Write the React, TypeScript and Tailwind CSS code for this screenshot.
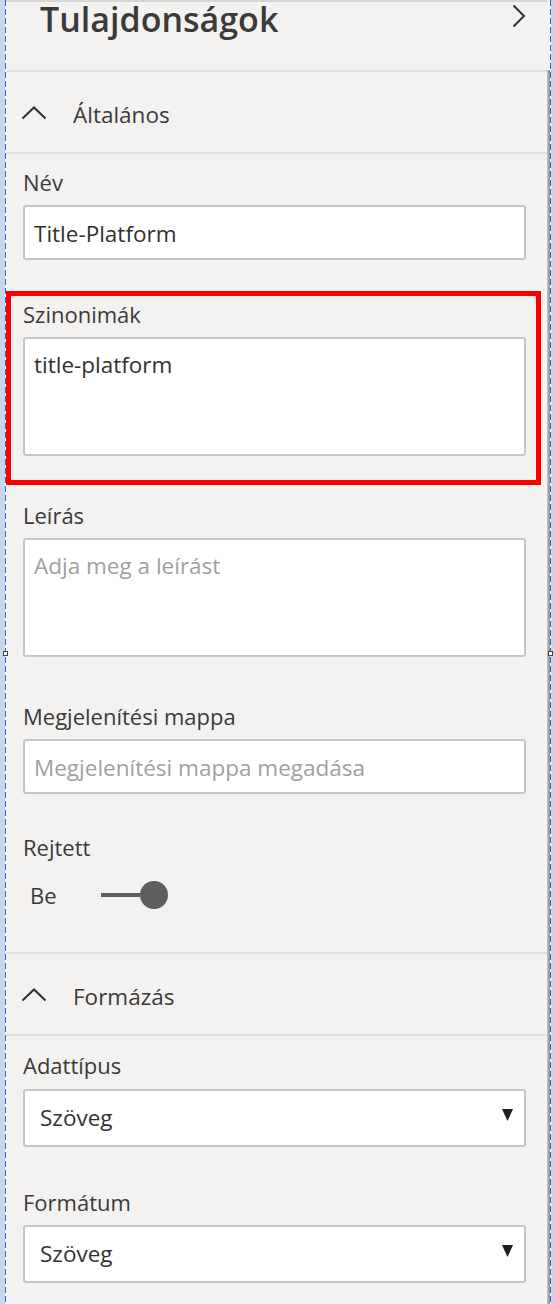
import { ReactNode } from 'react'

const textColor = 'text-[#3b3a39]'

function Label({ children, className = '' }: { children: ReactNode; className?: string }) {
  return <div className={`text-[22px] leading-[28px] ${textColor} ${className}`}>{children}</div>
}

function SectionHeader({ title }: { title: string }) {
  return (
    <>
      <div className="h-[80px] flex items-center pt-[6px]">
        <svg width="26" height="14" viewBox="0 0 26 14" className="ml-[15px] mt-[-4px]" fill="none">
          <path d="M1.5 12.5 L13 1.5 L24.5 12.5" stroke="#323130" strokeWidth="2" />
        </svg>
        <span className={`ml-[26px] text-[22.5px] ${textColor}`}>{title}</span>
      </div>
      <div className="h-[2px] bg-[#e1dfdd]" />
    </>
  )
}

function TextBox({ value, placeholder, className = '' }: { value?: string; placeholder?: string; className?: string }) {
  return (
    <div
      className={`h-[55px] bg-white border-2 border-[#c8c6c4] rounded-[3px] flex items-center pl-[9px] pt-[2px] text-[22.5px] ${className}`}
    >
      {value ? <span className="text-[#323130]">{value}</span> : <span className="text-[#a19f9d]">{placeholder}</span>}
    </div>
  )
}

function TextArea({ value, placeholder, className = '' }: { value?: string; placeholder?: string; className?: string }) {
  return (
    <div className={`h-[119px] bg-white border-2 border-[#c8c6c4] rounded-[3px] pl-[9px] pt-[12px] text-[22.5px] leading-[28px] ${className}`}>
      {value ? <span className="text-[#323130]">{value}</span> : <span className="text-[#a19f9d]">{placeholder}</span>}
    </div>
  )
}

function Select({ value, className = '' }: { value: string; className?: string }) {
  return (
    <div
      className={`h-[58px] bg-white border-2 border-[#c8c6c4] rounded-[3px] flex items-center justify-between pl-[15px] pr-[11px] text-[22.5px] text-[#323130] ${className}`}
    >
      <span>{value}</span>
      <svg width="11" height="12" viewBox="0 0 11 12" className="mt-[-6px]">
        <path d="M0 0 H11 L5.5 12 Z" fill="#201f1e" />
      </svg>
    </div>
  )
}

export default function App() {
  return (
    <div className="relative w-[554px] h-[1304px] overflow-hidden flex bg-[#c8d5ea] font-['Open_Sans','Noto_Sans',sans-serif]">
      <div className="w-[5px] shrink-0" />
      <div className="w-px shrink-0 bg-[repeating-linear-gradient(to_bottom,#1b6fd1_0_6px,#ffffff_6px_9px)]" />

      <div className="w-[541px] shrink-0 bg-[#f3f2f1] border-t-2 border-[#d6d6d6] flex flex-col">
        <div className="h-[68px] flex items-start justify-between">
          <h1 className="ml-[34px] text-[34px] leading-[34px] font-semibold text-[#3b3a39]">
            Tulajdonságok
          </h1>
          <svg width="14" height="24" viewBox="0 0 14 24" className="mr-[21px] mt-[2px]" fill="none">
            <path d="M1.5 1.5 L12 12 L1.5 22.5" stroke="#323130" strokeWidth="2" />
          </svg>
        </div>
        <div className="h-[2px] bg-[#e1dfdd]" />

        <SectionHeader title="Általános" />

        <div className="pl-[17px] pr-[21px] flex flex-col">
          <Label className="mt-[14px]">Név</Label>
          <TextBox value="Title-Platform" className="mt-[9px]" />

          <Label className="mt-[40px]">Szinonimák</Label>
          <TextArea value="title-platform" className="mt-[9px]" />

          <Label className="mt-[45px]">Leírás</Label>
          <TextArea placeholder="Adja meg a leírást" className="mt-[9px]" />

          <Label className="mt-[45px]">Megjelenítési mappa</Label>
          <TextBox placeholder="Megjelenítési mappa megadása" className="mt-[9px]" />

          <Label className="mt-[39px]">Rejtett</Label>
          <div className="mt-[20px] h-[28px] flex items-center">
            <span className={`ml-[7px] text-[22px] ${textColor}`}>Be</span>
            <div className="ml-[44px] flex items-center">
              <div className="w-[40px] h-[4px] bg-[#605e5c]" />
              <div className="w-[28px] h-[28px] rounded-full bg-[#605e5c] -ml-px" />
            </div>
          </div>
        </div>

        <div className="mt-[43px] h-[2px] bg-[#e1dfdd]" />
        <SectionHeader title="Formázás" />

        <div className="pl-[17px] pr-[21px] flex flex-col">
          <Label className="mt-[15px]">Adattípus</Label>
          <Select value="Szöveg" className="mt-[10px]" />

          <Label className="mt-[41px]">Formátum</Label>
          <Select value="Szöveg" className="mt-[9px]" />
        </div>
      </div>

      <div className="w-[3px] shrink-0 flex flex-col bg-[#f3f2f1]">
        <div className="h-[70px]" />
        <div className="flex-1 bg-[linear-gradient(to_right,#c4c4c4,#8f8f8f)]" />
      </div>
      <div className="w-px shrink-0 bg-[repeating-linear-gradient(to_bottom,#1b6fd1_0_6px,#ffffff_6px_9px)]" />
      <div className="w-[3px] shrink-0" />

      {/* annotation + selection handles */}
      <div className="absolute left-[6px] top-[291px] w-[535px] h-[194px] border-[5px] border-[#ff0000] pointer-events-none" />
      <div className="absolute left-[3px] top-[651px] w-[5px] h-[5px] border border-[#444] bg-white" />
      <div className="absolute left-[548px] top-[651px] w-[5px] h-[5px] border border-[#444] bg-white" />
    </div>
  )
}
